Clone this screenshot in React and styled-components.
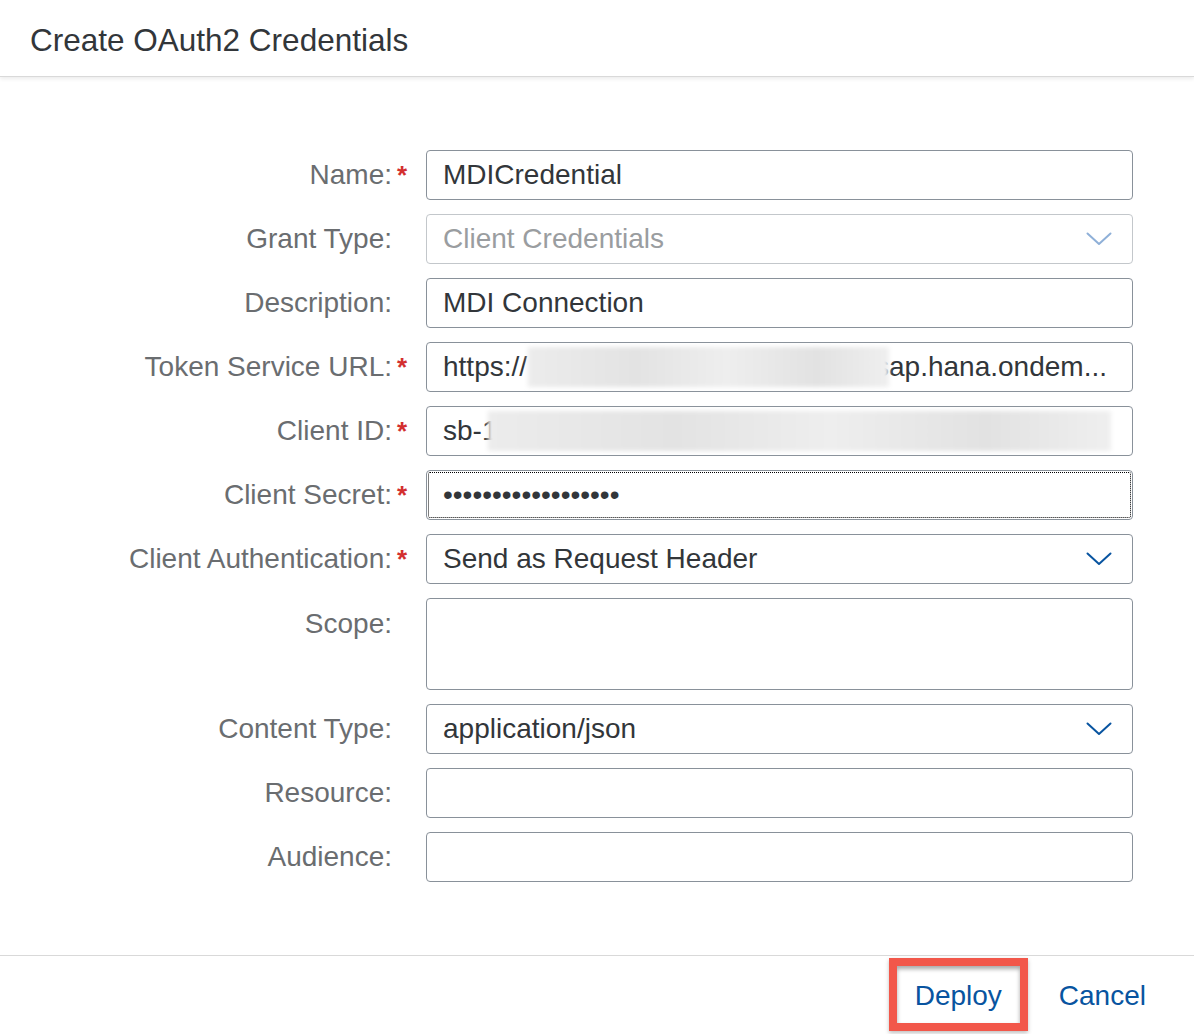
import React from 'react';
import styled, { createGlobalStyle } from 'styled-components';

const GlobalStyle = createGlobalStyle`
  html, body {
    margin: 0;
    padding: 0;
    background: #ffffff;
  }
  body {
    font-family: "Liberation Sans", Arial, sans-serif;
  }
`;

const fields = [
  { label: 'Name:', required: true, value: 'MDICredential' },
  { label: 'Grant Type:', value: 'Client Credentials', select: true, disabled: true },
  { label: 'Description:', value: 'MDI Connection' },
  { label: 'Token Service URL:', required: true, value: 'https://', tail: 'sap.hana.ondem...', blur: { left: 101, width: 361 } },
  { label: 'Client ID:', required: true, value: 'sb-1', blur: { left: 61, width: 623 } },
  { label: 'Client Secret:', required: true, value: '••••••••••••••••••', focused: true },
  { label: 'Client Authentication:', required: true, value: 'Send as Request Header', select: true },
  { label: 'Scope:', value: '', tall: true },
  { label: 'Content Type:', value: 'application/json', select: true },
  { label: 'Resource:', value: '' },
  { label: 'Audience:', value: '' },
];

const Chevron = ({ disabled }) => (
  <svg width="26" height="14" viewBox="0 0 26 14" fill="none">
    <path d="M1.5 1.5 L13 12 L24.5 1.5" stroke={disabled ? '#8fb0d8' : '#0854a0'} strokeWidth="2" strokeLinecap="round" strokeLinejoin="round" />
  </svg>
);

export default function App() {
  return (
    <Dialog>
      <GlobalStyle />
      <Header>
        <Title>Create OAuth2 Credentials</Title>
      </Header>
      <Body>
        {fields.map((f) => (
          <Row key={f.label} $tall={f.tall}>
            <Label $tall={f.tall}>
              <LabelText>{f.label}</LabelText>
              <Required>{f.required ? '*' : ''}</Required>
            </Label>
            <Field $tall={f.tall} $disabled={f.disabled} $focused={f.focused}>
              <Value $disabled={f.disabled}>
                {f.value}
                {f.tail && <Tail>{f.tail}</Tail>}
              </Value>
              {f.blur && <Blur style={{ left: f.blur.left, width: f.blur.width }} />}
              {f.select && (
                <Arrow>
                  <Chevron disabled={f.disabled} />
                </Arrow>
              )}
            </Field>
          </Row>
        ))}
      </Body>
      <Footer>
        <FooterButton $highlight>Deploy</FooterButton>
        <FooterButton>Cancel</FooterButton>
      </Footer>
    </Dialog>
  );
}

const Dialog = styled.div`
  width: 1194px;
  height: 1034px;
  display: flex;
  flex-direction: column;
  background: #fff;
  overflow: hidden;
`;

const Header = styled.div`
  height: 77px;
  box-sizing: border-box;
  display: flex;
  align-items: center;
  padding-left: 30px;
  border-bottom: 1px solid #d9d9d9;
  box-shadow: 0 2px 4px rgba(0, 0, 0, 0.08);
  position: relative;
  z-index: 1;
`;

const Title = styled.h1`
  margin: 0;
  font-size: 31.5px;
  font-weight: 400;
  color: #32363a;
  padding-top: 5px;
`;

const Body = styled.div`
  flex: 1;
  display: flex;
  flex-direction: column;
  gap: 14px;
  padding: 73px 61px 0 0;
`;

const Row = styled.div`
  display: grid;
  grid-template-columns: 412px 1fr;
  column-gap: 14px;
  height: ${(p) => (p.$tall ? '92px' : '50px')};
`;

const Label = styled.div`
  display: flex;
  justify-content: flex-end;
  align-items: ${(p) => (p.$tall ? 'flex-start' : 'center')};
  padding-top: ${(p) => (p.$tall ? '10px' : '0')};
  font-size: 28px;
  color: #6a6d70;
`;

const LabelText = styled.span`
  white-space: nowrap;
`;

const Required = styled.span`
  width: 20px;
  text-align: center;
  color: #d32f2f;
  font-size: 26px;
  font-weight: 700;
`;

const Field = styled.div`
  position: relative;
  box-sizing: border-box;
  border: 1px solid ${(p) => (p.$disabled ? '#c3c7cb' : '#89919a')};
  border-radius: 4px;
  display: flex;
  align-items: ${(p) => (p.$tall ? 'flex-start' : 'center')};
  padding: 0 17px 0 16px;
  background: #fff;
  outline: ${(p) => (p.$focused ? '1px dotted #000' : 'none')};
  outline-offset: -3px;
`;

const Value = styled.span`
  font-size: 28px;
  color: ${(p) => (p.$disabled ? '#9a9da0' : '#32363a')};
  white-space: nowrap;
  flex: 1;
  display: flex;
  justify-content: space-between;
`;

const Tail = styled.span`
  margin-right: 8px;
`;

const Blur = styled.div`
  position: absolute;
  top: 4px;
  bottom: 4px;
  background: linear-gradient(90deg, #ececec, #e3e3e3 30%, #eeeeee 55%, #e2e2e2 80%, #efefef);
  filter: blur(2px);
`;

const Arrow = styled.span`
  display: flex;
  margin-right: 3px;
`;

const Footer = styled.div`
  height: 79px;
  box-sizing: border-box;
  border-top: 1px solid #d9d9d9;
  display: flex;
  justify-content: flex-end;
  align-items: stretch;
  gap: 5px;
  padding: 2px 22px 3px 0;
`;

const FooterButton = styled.button`
  font-family: "Liberation Sans", Arial, sans-serif;
  font-size: 28px;
  color: #0854a0;
  background: #fff;
  border: ${(p) => (p.$highlight ? '8px solid #f2574a' : '8px solid transparent')};
  box-shadow: ${(p) => (p.$highlight ? 'inset 0 3px 4px rgba(0,0,0,0.35), 0 2px 4px rgba(0,0,0,0.25)' : 'none')};
  padding: 2px 18px 0;
  cursor: pointer;
`;
